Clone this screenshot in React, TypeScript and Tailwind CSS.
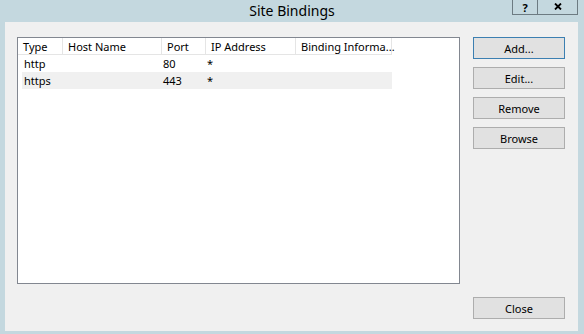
const columns = [
  { label: "Type", width: "w-[45px]" },
  { label: "Host Name", width: "w-[99px]" },
  { label: "Port", width: "w-[44px]" },
  { label: "IP Address", width: "w-[90px]" },
  { label: "Binding Informa...", width: "w-[96px]" },
];

const bindings = [
  { type: "http", host: "", port: "80", ip: "*", info: "" },
  { type: "https", host: "", port: "443", ip: "*", info: "" },
];

function DialogButton({ label, focused }: { label: string; focused?: boolean }) {
  return (
    <button
      className={`w-[92px] h-[22px] bg-[#e1e1e1] border text-[11px] text-black leading-none ${
        focused ? "border-[#3c7fb1]" : "border-[#adadad]"
      }`}
    >
      {label}
    </button>
  );
}

export default function App() {
  return (
    <div
      className="w-[584px] h-[334px] bg-[#c4d8df] flex flex-col"
      style={{ fontFamily: '"Noto Sans", "Open Sans", sans-serif' }}
    >
      {/* Title bar */}
      <div className="relative h-[22px] flex items-center justify-center">
        <span className="text-[14px] text-black leading-none">Site Bindings</span>
        <div className="absolute right-[6px] top-0 flex">
          <div className="w-[26px] h-[15px] border border-[#6d7b82] border-t-0 flex items-center justify-center text-[11px] font-bold leading-[13px]">
            ?
          </div>
          <div className="w-[40px] h-[15px] border border-[#6d7b82] border-t-0 border-l-0 flex items-center justify-center">
            <svg width="8" height="7" viewBox="0 0 8 7" className="mb-[1px]">
              <path d="M1 0.5 L7 6.5 M7 0.5 L1 6.5" stroke="#000" strokeWidth="1.8" />
            </svg>
          </div>
        </div>
      </div>

      {/* Client area */}
      <div className="ml-[5px] mr-[6px] h-[309px] bg-[#f0f0f0] flex flex-col pt-[15px] pl-[12px] pr-[13px]">
        <div className="flex gap-[13px]">
          {/* List view */}
          <div className="w-[443px] h-[247px] bg-white border border-[#828790]">
            <div className="flex h-[17px]">
              {columns.map((c) => (
                <div
                  key={c.label}
                  className={`${c.width} h-full border-r border-b border-[#e5e5e5] pl-[5px] flex items-center text-[11px] text-black leading-none whitespace-nowrap`}
                >
                  {c.label}
                </div>
              ))}
            </div>
            {bindings.map((b, i) => (
              <div
                key={b.type}
                className={`ml-[4px] w-[370px] h-[17px] flex items-center text-[11px] text-black leading-none ${
                  i % 2 === 1 ? "bg-[#f0f0f0]" : ""
                }`}
              >
                <div className="w-[41px] pl-[2px]">{b.type}</div>
                <div className="w-[99px]">{b.host}</div>
                <div className="w-[44px] pl-[1px]">{b.port}</div>
                <div className="w-[90px] pl-[1px]">{b.ip}</div>
                <div className="w-[96px]">{b.info}</div>
              </div>
            ))}
          </div>

          {/* Action buttons */}
          <div className="flex flex-col gap-[8px]">
            <DialogButton label="Add..." focused />
            <DialogButton label="Edit..." />
            <DialogButton label="Remove" />
            <DialogButton label="Browse" />
          </div>
        </div>

        <div className="flex justify-end mt-[13px]">
          <DialogButton label="Close" />
        </div>
      </div>
    </div>
  );
}
